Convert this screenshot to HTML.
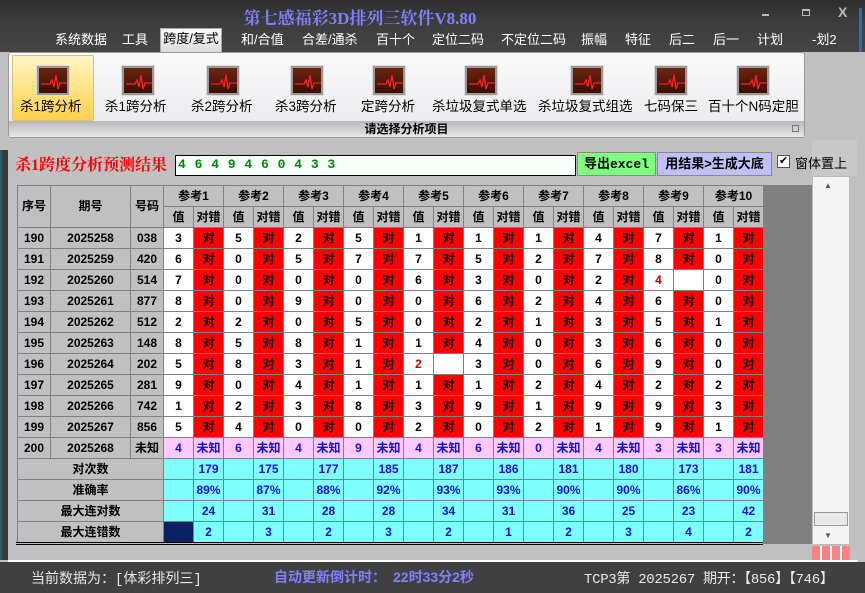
<!DOCTYPE html>
<html><head><meta charset="utf-8">
<style>
*{margin:0;padding:0;box-sizing:border-box}
body{width:865px;height:593px;overflow:hidden;background:#c0c0c0;font-family:"Liberation Sans","Noto Sans CJK SC",sans-serif;position:relative}
.abs{position:absolute}
#top{left:0;top:0;width:865px;height:52px;background:linear-gradient(#2e2e2e,#3c3c3c 40%,#454545)}
#title{left:0;width:720px;top:4px;text-align:center;color:#8080ff;font-size:17px;font-weight:bold;font-family:"Liberation Serif","Noto Serif CJK SC",serif}
.menu{top:29px;color:#fff;font-size:13px}
#tab{left:160px;top:28px;width:62px;height:24px;background:linear-gradient(#fafafa,#dcdcdc);border:1px solid #aaa;border-bottom:none;color:#000;font-size:13px;text-align:center;line-height:20px}
#ribbon{left:8px;top:52px;width:797px;height:86px;background:linear-gradient(#fafafa,#e8e8ec);border:1px solid #999;border-radius:3px}
#hl{left:12px;top:55px;width:82px;height:66px;background:linear-gradient(#fff4c8,#ffe58a 45%,#ffd050);border:1px solid #e0c070;border-radius:2px}
.ic{width:32px;height:29px;top:66px;background:linear-gradient(#6a2410,#3a1004);border:2px solid #999;box-shadow:0 0 0 1px #ddd}
.ic svg{position:absolute;left:2px;top:4px}
.lb{top:95px;font-size:13.5px;color:#000;white-space:nowrap}
#bar{left:9px;top:121px;width:795px;height:16px;background:linear-gradient(#b8b8b8,#e8e8e8);text-align:center;font-size:12px;font-weight:bold;line-height:16px}
#lstrip{left:0;top:150px;width:8px;height:410px;background:#3a3a3a;border-left:2px solid #2a5a6a}
#head{left:15px;top:152px;color:#f00;font-size:16px;font-weight:bold;font-family:"Liberation Serif","Noto Serif CJK SC",serif;white-space:nowrap}
#inp{left:175px;top:155px;width:401px;height:21px;background:#f6fffa;border:1px solid #000;color:#080;font-family:"Liberation Mono",monospace;font-weight:bold;font-size:13px;line-height:18px;padding-left:2px;letter-spacing:0.5px}
.btn{top:152px;height:24px;border:1px solid #888;font-weight:bold;font-size:13px;line-height:22px;text-align:center}
#grid{left:17px;top:185px;border-collapse:collapse;table-layout:fixed;font-size:12px;font-weight:bold}
#grid td{border:1px solid #808080;height:21px;text-align:center;padding:0;line-height:19px}
.g{background:#c0c0c0}
.w{background:#fff}
.r{background:#f00}
.p{background:#ffc8ff;color:#1010e0}
.c{background:#80ffff;color:#1010e0}
#dark{left:763px;top:185px;width:49px;height:359px;background:#808080}
#sb{left:812px;top:176px;width:38px;height:369px;background:#f4f4f4;border:1px solid #bbb}
#status{left:0;top:562px;width:865px;height:31px;background:#404040;color:#e8e8e8;font-size:14px;font-family:"Liberation Mono","Noto Sans CJK SC",monospace}
</style></head><body>
<div id="top" class="abs"></div>
<div id="title" class="abs">第七感福彩3D排列三软件V8.80</div>
<div class="abs" style="left:762px;top:14px;width:7px;height:2px;background:#bbb"></div>
<div class="abs" style="left:802px;top:9px;width:8px;height:7px;border:1px solid #bbb;border-top-width:2px"></div>
<div class="abs" style="left:838px;top:4px;color:#bbb;font-size:14px;font-weight:bold">X</div>
<div class="abs" style="left:859px;top:8px;width:3px;height:44px;background:#2a6fa8"></div>
<div class="menu abs" style="left:55px">系统数据</div>
<div class="menu abs" style="left:122px">工具</div>
<div id="tab" class="abs">跨度/复式</div>
<div class="menu abs" style="left:241px">和/合值</div>
<div class="menu abs" style="left:302px">合差/通杀</div>
<div class="menu abs" style="left:376px">百十个</div>
<div class="menu abs" style="left:432px">定位二码</div>
<div class="menu abs" style="left:501px">不定位二码</div>
<div class="menu abs" style="left:581px">振幅</div>
<div class="menu abs" style="left:625px">特征</div>
<div class="menu abs" style="left:669px">后二</div>
<div class="menu abs" style="left:713px">后一</div>
<div class="menu abs" style="left:757px">计划</div>
<div class="menu abs" style="left:812px">-划2</div>
<div id="ribbon" class="abs"></div>
<div id="hl" class="abs"></div>
<div class="abs ic" style="left:37px"><svg width="26" height="20"><path d="M0 12 H9 L11 8 L13 15 L15 3 L17 17 L19 11 H26" stroke="#ff2020" fill="none" stroke-width="1.3"/></svg></div>
<div class="abs ic" style="left:122px"><svg width="26" height="20"><path d="M0 12 H9 L11 8 L13 15 L15 3 L17 17 L19 11 H26" stroke="#ff2020" fill="none" stroke-width="1.3"/></svg></div>
<div class="abs ic" style="left:207px"><svg width="26" height="20"><path d="M0 12 H9 L11 8 L13 15 L15 3 L17 17 L19 11 H26" stroke="#ff2020" fill="none" stroke-width="1.3"/></svg></div>
<div class="abs ic" style="left:291px"><svg width="26" height="20"><path d="M0 12 H9 L11 8 L13 15 L15 3 L17 17 L19 11 H26" stroke="#ff2020" fill="none" stroke-width="1.3"/></svg></div>
<div class="abs ic" style="left:373px"><svg width="26" height="20"><path d="M0 12 H9 L11 8 L13 15 L15 3 L17 17 L19 11 H26" stroke="#ff2020" fill="none" stroke-width="1.3"/></svg></div>
<div class="abs ic" style="left:465px"><svg width="26" height="20"><path d="M0 12 H9 L11 8 L13 15 L15 3 L17 17 L19 11 H26" stroke="#ff2020" fill="none" stroke-width="1.3"/></svg></div>
<div class="abs ic" style="left:571px"><svg width="26" height="20"><path d="M0 12 H9 L11 8 L13 15 L15 3 L17 17 L19 11 H26" stroke="#ff2020" fill="none" stroke-width="1.3"/></svg></div>
<div class="abs ic" style="left:655px"><svg width="26" height="20"><path d="M0 12 H9 L11 8 L13 15 L15 3 L17 17 L19 11 H26" stroke="#ff2020" fill="none" stroke-width="1.3"/></svg></div>
<div class="abs ic" style="left:737px"><svg width="26" height="20"><path d="M0 12 H9 L11 8 L13 15 L15 3 L17 17 L19 11 H26" stroke="#ff2020" fill="none" stroke-width="1.3"/></svg></div>
<div class="abs lb" style="left:20px">杀1跨分析</div>
<div class="abs lb" style="left:105px">杀1跨分析</div>
<div class="abs lb" style="left:191px">杀2跨分析</div>
<div class="abs lb" style="left:275px">杀3跨分析</div>
<div class="abs lb" style="left:361px">定跨分析</div>
<div class="abs lb" style="left:432px">杀垃圾复式单选</div>
<div class="abs lb" style="left:538px">杀垃圾复式组选</div>
<div class="abs lb" style="left:644px">七码保三</div>
<div class="abs lb" style="left:708px">百十个N码定胆</div>
<div id="bar" class="abs">请选择分析项目</div>
<div class="abs" style="left:792px;top:125px;width:7px;height:7px;border:1px solid #777"></div>
<div class="abs" style="left:812px;top:140px;width:45px;height:36px;background:#c8c8c8"></div>
<div id="lstrip" class="abs"></div>
<div id="head" class="abs">杀1跨度分析预测结果</div>
<div id="inp" class="abs">4 6 4 9 4 6 0 4 3 3</div>
<div class="abs btn" style="left:577px;width:79px;background:#80ff80">导出<span style="font-family:'Liberation Mono',monospace">excel</span></div>
<div class="abs btn" style="left:657px;width:115px;background:#c0c0ff">用结果&gt;生成大底</div>
<div class="abs" style="left:777px;top:155px;width:13px;height:13px;background:#fff;border:1px solid #555;font-size:11px;line-height:11px;text-align:center">✔</div>
<div class="abs" style="left:795px;top:153px;font-size:13px">窗体置上</div>
<div id="dark" class="abs"></div>
<div id="sb" class="abs"><div class="abs" style="left:11px;top:4px;font-size:8px;color:#555">▲</div><div class="abs" style="left:1px;top:335px;width:34px;height:14px;background:#e8e8e8;border:1px solid #999"></div><div class="abs" style="left:11px;top:354px;font-size:8px;color:#555">▼</div></div>
<div class="abs" style="left:812px;top:546px;width:38px;height:14px;background:repeating-linear-gradient(90deg,#ff8080 0 8px,#fff 8px 10px)"></div>
<table id="grid" class="abs">
<colgroup><col style="width:33px"><col style="width:80px"><col style="width:33px"><col span="20" style="width:30px"></colgroup>
<tr class="g"><td rowspan="2">序号</td><td rowspan="2">期号</td><td rowspan="2">号码</td><td colspan="2">参考1</td><td colspan="2">参考2</td><td colspan="2">参考3</td><td colspan="2">参考4</td><td colspan="2">参考5</td><td colspan="2">参考6</td><td colspan="2">参考7</td><td colspan="2">参考8</td><td colspan="2">参考9</td><td colspan="2">参考10</td></tr>
<tr class="g"><td>值</td><td>对错</td><td>值</td><td>对错</td><td>值</td><td>对错</td><td>值</td><td>对错</td><td>值</td><td>对错</td><td>值</td><td>对错</td><td>值</td><td>对错</td><td>值</td><td>对错</td><td>值</td><td>对错</td><td>值</td><td>对错</td></tr>
<tr><td class="g">190</td><td class="g">2025258</td><td class="g">038</td><td class="w">3</td><td class="r">对</td><td class="w">5</td><td class="r">对</td><td class="w">2</td><td class="r">对</td><td class="w">5</td><td class="r">对</td><td class="w">1</td><td class="r">对</td><td class="w">1</td><td class="r">对</td><td class="w">1</td><td class="r">对</td><td class="w">4</td><td class="r">对</td><td class="w">7</td><td class="r">对</td><td class="w">1</td><td class="r">对</td></tr>
<tr><td class="g">191</td><td class="g">2025259</td><td class="g">420</td><td class="w">6</td><td class="r">对</td><td class="w">0</td><td class="r">对</td><td class="w">5</td><td class="r">对</td><td class="w">7</td><td class="r">对</td><td class="w">7</td><td class="r">对</td><td class="w">5</td><td class="r">对</td><td class="w">2</td><td class="r">对</td><td class="w">7</td><td class="r">对</td><td class="w">8</td><td class="r">对</td><td class="w">0</td><td class="r">对</td></tr>
<tr><td class="g">192</td><td class="g">2025260</td><td class="g">514</td><td class="w">7</td><td class="r">对</td><td class="w">0</td><td class="r">对</td><td class="w">0</td><td class="r">对</td><td class="w">0</td><td class="r">对</td><td class="w">6</td><td class="r">对</td><td class="w">3</td><td class="r">对</td><td class="w">0</td><td class="r">对</td><td class="w">2</td><td class="r">对</td><td class="w" style="color:#c00000">4</td><td class="w"></td><td class="w">0</td><td class="r">对</td></tr>
<tr><td class="g">193</td><td class="g">2025261</td><td class="g">877</td><td class="w">8</td><td class="r">对</td><td class="w">0</td><td class="r">对</td><td class="w">9</td><td class="r">对</td><td class="w">0</td><td class="r">对</td><td class="w">0</td><td class="r">对</td><td class="w">6</td><td class="r">对</td><td class="w">2</td><td class="r">对</td><td class="w">4</td><td class="r">对</td><td class="w">6</td><td class="r">对</td><td class="w">0</td><td class="r">对</td></tr>
<tr><td class="g">194</td><td class="g">2025262</td><td class="g">512</td><td class="w">2</td><td class="r">对</td><td class="w">2</td><td class="r">对</td><td class="w">0</td><td class="r">对</td><td class="w">5</td><td class="r">对</td><td class="w">0</td><td class="r">对</td><td class="w">2</td><td class="r">对</td><td class="w">1</td><td class="r">对</td><td class="w">3</td><td class="r">对</td><td class="w">5</td><td class="r">对</td><td class="w">1</td><td class="r">对</td></tr>
<tr><td class="g">195</td><td class="g">2025263</td><td class="g">148</td><td class="w">8</td><td class="r">对</td><td class="w">5</td><td class="r">对</td><td class="w">8</td><td class="r">对</td><td class="w">1</td><td class="r">对</td><td class="w">1</td><td class="r">对</td><td class="w">4</td><td class="r">对</td><td class="w">0</td><td class="r">对</td><td class="w">3</td><td class="r">对</td><td class="w">6</td><td class="r">对</td><td class="w">0</td><td class="r">对</td></tr>
<tr><td class="g">196</td><td class="g">2025264</td><td class="g">202</td><td class="w">5</td><td class="r">对</td><td class="w">8</td><td class="r">对</td><td class="w">3</td><td class="r">对</td><td class="w">1</td><td class="r">对</td><td class="w" style="color:#c00000">2</td><td class="w"></td><td class="w">3</td><td class="r">对</td><td class="w">0</td><td class="r">对</td><td class="w">6</td><td class="r">对</td><td class="w">9</td><td class="r">对</td><td class="w">0</td><td class="r">对</td></tr>
<tr><td class="g">197</td><td class="g">2025265</td><td class="g">281</td><td class="w">9</td><td class="r">对</td><td class="w">0</td><td class="r">对</td><td class="w">4</td><td class="r">对</td><td class="w">1</td><td class="r">对</td><td class="w">1</td><td class="r">对</td><td class="w">1</td><td class="r">对</td><td class="w">2</td><td class="r">对</td><td class="w">4</td><td class="r">对</td><td class="w">2</td><td class="r">对</td><td class="w">2</td><td class="r">对</td></tr>
<tr><td class="g">198</td><td class="g">2025266</td><td class="g">742</td><td class="w">1</td><td class="r">对</td><td class="w">2</td><td class="r">对</td><td class="w">3</td><td class="r">对</td><td class="w">8</td><td class="r">对</td><td class="w">3</td><td class="r">对</td><td class="w">9</td><td class="r">对</td><td class="w">1</td><td class="r">对</td><td class="w">9</td><td class="r">对</td><td class="w">9</td><td class="r">对</td><td class="w">3</td><td class="r">对</td></tr>
<tr><td class="g">199</td><td class="g">2025267</td><td class="g">856</td><td class="w">5</td><td class="r">对</td><td class="w">4</td><td class="r">对</td><td class="w">0</td><td class="r">对</td><td class="w">0</td><td class="r">对</td><td class="w">2</td><td class="r">对</td><td class="w">0</td><td class="r">对</td><td class="w">2</td><td class="r">对</td><td class="w">1</td><td class="r">对</td><td class="w">9</td><td class="r">对</td><td class="w">1</td><td class="r">对</td></tr>
<tr><td class="g">200</td><td class="g">2025268</td><td class="g">未知</td><td class="p">4</td><td class="p">未知</td><td class="p">6</td><td class="p">未知</td><td class="p">4</td><td class="p">未知</td><td class="p">9</td><td class="p">未知</td><td class="p">4</td><td class="p">未知</td><td class="p">6</td><td class="p">未知</td><td class="p">0</td><td class="p">未知</td><td class="p">4</td><td class="p">未知</td><td class="p">3</td><td class="p">未知</td><td class="p">3</td><td class="p">未知</td></tr>
<tr><td class="g" colspan="3">对次数</td><td class="c"></td><td class="c">179</td><td class="c"></td><td class="c">175</td><td class="c"></td><td class="c">177</td><td class="c"></td><td class="c">185</td><td class="c"></td><td class="c">187</td><td class="c"></td><td class="c">186</td><td class="c"></td><td class="c">181</td><td class="c"></td><td class="c">180</td><td class="c"></td><td class="c">173</td><td class="c"></td><td class="c">181</td></tr>
<tr><td class="g" colspan="3">准确率</td><td class="c"></td><td class="c">89%</td><td class="c"></td><td class="c">87%</td><td class="c"></td><td class="c">88%</td><td class="c"></td><td class="c">92%</td><td class="c"></td><td class="c">93%</td><td class="c"></td><td class="c">93%</td><td class="c"></td><td class="c">90%</td><td class="c"></td><td class="c">90%</td><td class="c"></td><td class="c">86%</td><td class="c"></td><td class="c">90%</td></tr>
<tr><td class="g" colspan="3">最大连对数</td><td class="c"></td><td class="c">24</td><td class="c"></td><td class="c">31</td><td class="c"></td><td class="c">28</td><td class="c"></td><td class="c">28</td><td class="c"></td><td class="c">34</td><td class="c"></td><td class="c">31</td><td class="c"></td><td class="c">36</td><td class="c"></td><td class="c">25</td><td class="c"></td><td class="c">23</td><td class="c"></td><td class="c">42</td></tr>
<tr><td class="g" colspan="3">最大连错数</td><td style="background:#0a2060"></td><td class="c">2</td><td class="c"></td><td class="c">3</td><td class="c"></td><td class="c">2</td><td class="c"></td><td class="c">3</td><td class="c"></td><td class="c">2</td><td class="c"></td><td class="c">1</td><td class="c"></td><td class="c">2</td><td class="c"></td><td class="c">3</td><td class="c"></td><td class="c">4</td><td class="c"></td><td class="c">2</td></tr>
</table>
<div class="abs" style="left:16px;top:542px;width:747px;height:3px;border-top:1px solid #000;border-bottom:1px solid #000"></div>
<div class="abs" style="left:8px;top:560px;width:850px;height:2px;background:#fff"></div>
<div id="status" class="abs">
<span class="abs" style="left:31px;top:6px">当前数据为：[体彩排列三]</span>
<span class="abs" style="left:274px;top:5px;color:#8080ff;font-weight:bold;font-family:'Liberation Sans','Noto Sans CJK SC',sans-serif">自动更新倒计时：　22时33分2秒</span>
<span class="abs" style="left:584px;top:6px;letter-spacing:-0.3px">TCP3第 2025267 期开：【856】【746】</span>
</div>
</body></html>
